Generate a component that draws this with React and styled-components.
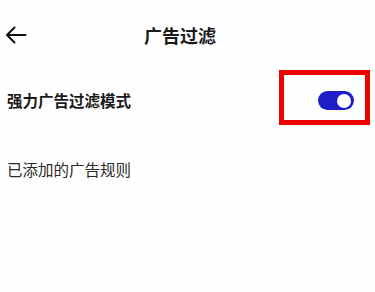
import React from "react";
import styled, { createGlobalStyle } from "styled-components";

const Global = createGlobalStyle`
  html, body { margin: 0; padding: 0; background: #fff; }
  body { font-family: "Noto Sans CJK SC", "Noto Sans", sans-serif; color: #1a1a1a; }
`;

const Page = styled.div`
  width: 375px;
  height: 292px;
  background: #fefefe;
  display: flex;
  flex-direction: column;
`;

const Header = styled.div`
  height: 70px;
  display: grid;
  grid-template-columns: 40px 1fr 40px;
  align-items: center;
  padding: 0 6px 0 5px;
  box-sizing: border-box;
`;

const BackButton = styled.div`
  width: 22px;
  height: 18px;
  display: flex;
  align-items: center;
`;

const Title = styled.div`
  text-align: center;
  font-size: 18px;
  font-weight: 700;
  color: #1a1a1a;
  padding-right: 14px;
`;

const Row = styled.div`
  display: flex;
  align-items: center;
  justify-content: space-between;
  padding: 0 5px 0 7px;
  height: ${(p) => p.$h}px;
`;

const Label = styled.div`
  font-size: 15.5px;
  font-weight: ${(p) => (p.$bold ? 700 : 400)};
  color: ${(p) => (p.$bold ? "#1a1a1a" : "#2a2a2a")};
  margin-top: ${(p) => p.$mt || 0}px;
`;

const Highlight = styled.div`
  width: 91px;
  height: 55px;
  box-sizing: border-box;
  border: 5px solid #ee0000;
  display: flex;
  justify-content: flex-end;
  align-items: flex-start;
  padding: 16px 11px 0 0;
`;

const Switch = styled.div`
  width: 36px;
  height: 19px;
  border-radius: 10px;
  background: #1e1ec8;
  display: flex;
  align-items: center;
  justify-content: flex-end;
  padding-right: 3px;
  box-sizing: border-box;
`;

const Knob = styled.div`
  width: 14px;
  height: 14px;
  border-radius: 50%;
  background: #fff;
`;

export default function App() {
  return (
    <Page>
      <Global />
      <Header>
        <BackButton>
          <svg width="22" height="18" viewBox="0 0 22 18" fill="none">
            <path d="M20.5 9H2M9.5 1.5L2 9L9.5 16.5" stroke="#111" strokeWidth="2.1" strokeLinecap="round" strokeLinejoin="round" />
          </svg>
        </BackButton>
        <Title>广告过滤</Title>
        <div />
      </Header>
      <Row $h={55}>
        <Label $bold $mt={4}>强力广告过滤模式</Label>
        <Highlight>
          <Switch>
            <Knob />
          </Switch>
        </Highlight>
      </Row>
      <Row $h={88}>
        <Label>已添加的广告规则</Label>
      </Row>
    </Page>
  );
}
